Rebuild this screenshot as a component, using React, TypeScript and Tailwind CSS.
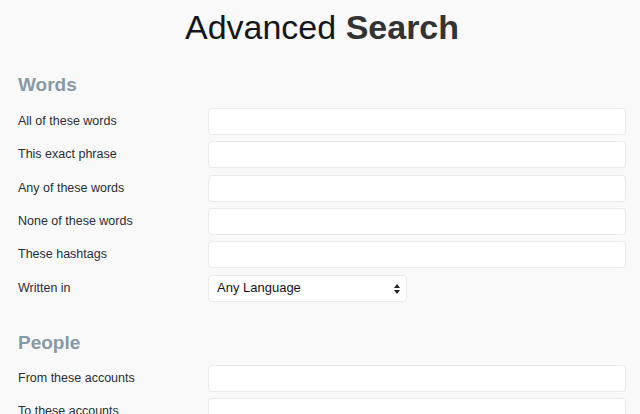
import React from "react";

const font = { fontFamily: '"Liberation Sans", Arial, Helvetica, sans-serif' };

function Row({ label, children }: { label: string; children?: React.ReactNode }) {
  return (
    <div className="flex items-center h-[27px]">
      <div className="w-[190px] shrink-0 text-[12.5px] text-[#292f33]">{label}</div>
      {children ?? (
        <input
          type="text"
          className="w-[418px] h-[27px] bg-white border border-[#e6ecf0] rounded-[4px] outline-none"
        />
      )}
    </div>
  );
}

export default function App() {
  return (
    <div className="w-[640px] h-[414px] overflow-hidden bg-[#f9f9f9] pt-[10px] pl-[18px]" style={font}>
      <h1 className="text-center text-[34px] leading-[34px] text-[#14171a] pr-[18px] ml-[4px]">
        <span className="font-normal">Advanced</span>{" "}
        <span className="font-bold text-[#333]">Search</span>
      </h1>
      <h2 className="mt-[30.5px] text-[19px] leading-[19px] font-bold text-[#8899a6]">Words</h2>
      <div className="mt-[14.4px] flex flex-col gap-[6.33px]">
        <Row label="All of these words" />
        <Row label="This exact phrase" />
        <Row label="Any of these words" />
        <Row label="None of these words" />
        <Row label="These hashtags" />
        <Row label="Written in">
          <div className="relative w-[199px] h-[27px] bg-white border border-[#e6ecf0] rounded-[4px] flex items-center pl-[8px] text-[13px] text-[#14171a]">
            Any Language
            <svg className="absolute right-[6px] top-[8px]" width="6" height="10" viewBox="0 0 6 10">
              <path d="M3 0 L6 4 L0 4 Z" fill="#222" />
              <path d="M3 10 L6 6 L0 6 Z" fill="#222" />
            </svg>
          </div>
        </Row>
      </div>
      <h2 className="mt-[31.2px] text-[19px] leading-[19px] font-bold text-[#8899a6]">People</h2>
      <div className="mt-[12.8px] flex flex-col gap-[6.33px]">
        <Row label="From these accounts" />
        <Row label="To these accounts" />
      </div>
    </div>
  );
}
